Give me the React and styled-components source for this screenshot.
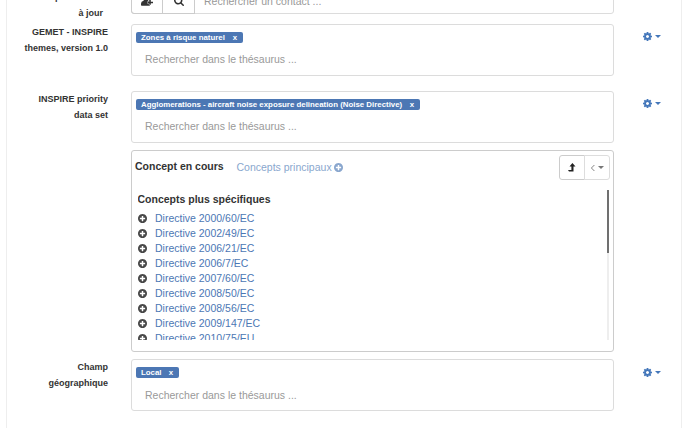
import React from "react";
import styled, { createGlobalStyle } from "styled-components";

const GlobalStyle = createGlobalStyle`
  * { box-sizing: border-box; }
  body { margin: 0; background: #fff; overflow: hidden; font-family: "Liberation Sans", Arial, sans-serif; font-size: 10.5px; line-height: 15px; color: #333; }
  svg { display: block; flex: none; fill: currentColor; }
`;

const Form = styled.form`
  height: 428px;
  margin: 0 2px 0 6px;
  border: solid #eee;
  border-width: 0 1px;
  overflow: hidden;
`;

const Row = styled.div`
  display: grid;
  grid-template-columns: 101px 483px 1fr;
  column-gap: 23px;
  align-items: start;
  margin-bottom: ${(p) => p.$gap || 0}px;
  margin-top: ${(p) => p.$offset || 0}px;
`;

const Label = styled.label`
  text-align: right;
  font-size: 9px;
  font-weight: bold;
  line-height: 16px;
  white-space: nowrap;
  margin-top: ${(p) => p.$shift || 0}px;
`;

const LabelLine = styled.span`
  display: block;
  padding-right: ${(p) => p.$inset || 0}px;
`;

const Field = styled.div`
  height: 52px;
  border: 1px solid #dcdcdc;
  border-radius: 3px;
  padding: 7px 4px 0;
`;

const Tag = styled.span`
  display: flex;
  align-items: center;
  justify-content: space-between;
  width: ${(p) => p.$width}px;
  height: 11px;
  padding: 0 6px 0 5px;
  border-radius: 2px;
  background: #4c77b4;
  color: #fff;
  font-size: 7.87px;
  font-weight: bold;
  line-height: 11px;
  white-space: nowrap;
`;

const Hint = styled.div`
  margin: ${(p) => (p.$low ? 10 : 9)}px 0 0 9px;
  color: #999;
`;

const Settings = styled.div`
  display: flex;
  align-items: center;
  gap: 3px;
  padding: ${(p) => (p.$low ? 9 : 8)}px 0 0 6px;
  color: #4477ba;
`;

const Caret = styled.i`
  border: solid transparent;
  border-width: 3px 3px 0;
  border-top-color: currentColor;
`;

const ContactField = styled.div`
  display: flex;
  height: 24px;
  border: 1px solid #dcdcdc;
  border-radius: 3px;
`;

const ContactButton = styled.span`
  display: flex;
  align-items: center;
  justify-content: center;
  width: ${(p) => p.$width}px;
  margin: -1px 0 -1px -1px;
  padding-bottom: 2px;
  border: 1px solid #ccc;
  border-radius: ${(p) => (p.$first ? "3px 0 0 3px" : "0")};
`;

const ContactHint = styled.span`
  padding: 3px 0 0 9px;
  color: #999;
`;

const Browser = styled.section`
  width: 483px;
  height: 202px;
  margin: 7px 0 7px 124px;
  border: 1px solid #ccc;
  border-radius: 3px;
`;

const BrowserHeader = styled.header`
  display: flex;
  height: 39px;
  padding: 4px 3px 0;
`;

const Current = styled.strong`
  width: 101.5px;
  line-height: 23px;
  white-space: nowrap;
`;

const TopConcepts = styled.a`
  display: flex;
  align-items: center;
  gap: 2px;
  height: 25px;
  color: #8aa7ce;
  white-space: nowrap;
`;

const ButtonGroup = styled.div`
  display: flex;
  margin-left: auto;
`;

const ToolButton = styled.button`
  display: flex;
  align-items: center;
  justify-content: center;
  gap: 2px;
  width: 26px;
  height: 25px;
  padding: 0;
  border: 1px solid ${(p) => (p.$muted ? "#ddd" : "#ccc")};
  border-radius: ${(p) => (p.$muted ? "0 3px 3px 0" : "3px 0 0 3px")};
  margin-left: ${(p) => (p.$muted ? -1 : 0)}px;
  background: #fff;
  color: ${(p) => (p.$muted ? "#777" : "#222")};
`;

const Scroller = styled.div`
  display: flex;
  justify-content: space-between;
  height: 150px;
  margin: 0 4px 0 5.5px;
  overflow: hidden;
`;

const Track = styled.div`
  width: 2px;
  height: 150px;
  background: #eee;
`;

const Thumb = styled.div`
  height: 63px;
  background: #707070;
`;

const Narrower = styled.h4`
  margin: 2px 0 4px;
  font-size: 10.5px;
  line-height: 15px;
`;

const Concept = styled.div`
  display: flex;
  align-items: center;
  gap: 8.5px;
  height: 15px;
  color: #484848;
`;

const ConceptLink = styled.a`
  color: #4c77b4;
`;

const CogIcon = () => (
  <svg width="9" height="9" viewBox="0 128 1536 1536">
    <path d="M1024 896q0-106-75-181t-181-75-181 75-75 181 75 181 181 75 181-75 75-181zm512-109v222q0 12-8 23t-20 13l-185 28q-19 54-39 91 35 50 107 138 10 12 10 25t-9 23q-27 37-99 108t-94 71q-12 0-26-9l-138-108q-44 23-91 38-16 136-29 186-7 28-36 28h-222q-14 0-24.5-8.5t-11.5-21.5l-28-184q-49-16-90-37l-141 107q-10 9-25 9-14 0-25-11-126-114-165-168-7-10-7-23 0-12 8-23 15-21 51-66.5t54-70.5q-27-50-41-99l-183-27q-13-2-21-12.5t-8-23.5v-222q0-12 8-23t19-13l186-28q14-46 39-92-40-57-107-138-10-12-10-24 0-10 9-23 26-36 98.5-107.5t94.5-71.5q13 0 26 10l138 107q44-23 91-38 16-136 29-186 7-28 36-28h222q14 0 24.5 8.5t11.5 21.5l28 184q49 16 90 37l142-107q9-9 24-9 13 0 25 10 129 119 165 170 7 8 7 22 0 12-8 23-15 21-51 66.5t-54 70.5q26 50 41 98l183 28q13 2 21 12.5t8 23.5z" />
  </svg>
);

const PlusIcon = () => (
  <svg width="9" height="9" viewBox="0 128 1536 1536">
    <path d="M1216 960v-128q0-26-19-45t-45-19h-256v-256q0-26-19-45t-45-19h-128q-26 0-45 19t-19 45v256h-256q-26 0-45 19t-19 45v128q0 26 19 45t45 19h256v256q0 26 19 45t45 19h128q26 0 45-19t19-45v-256h256q26 0 45-19t19-45zm320-64q0 209-103 385.5t-279.5 279.5-385.5 103-385.5-103-279.5-279.5-103-385.5 103-385.5 279.5-279.5 385.5-103 385.5 103 279.5 279.5 103 385.5z" />
  </svg>
);

const SearchIcon = () => (
  <svg width="10" height="10" viewBox="0 128 1664 1664">
    <path d="M1152 832q0-185-131.5-316.5t-316.5-131.5-316.5 131.5-131.5 316.5 131.5 316.5 316.5 131.5 316.5-131.5 131.5-316.5zm512 832q0 52-38 90t-90 38q-54 0-90-38l-343-342q-179 124-399 124-143 0-273.5-55.5t-225-150-150-225-55.5-273.5 55.5-273.5 150-225 225-150 273.5-55.5 273.5 55.5 225 150 150 225 55.5 273.5q0 220-124 399l343 343q37 37 37 90z" />
  </svg>
);

const AddContactIcon = () => (
  <svg width="12" height="10" viewBox="0 0 12 10">
    <circle cx="5" cy="2.8" r="2.8" />
    <path d="M0 9V7.5Q0 5.2 2.5 4.8H7Q9 5.2 9 7.5V9Q9 9.7 8.3 9.7H.7Q0 9.7 0 9Z" />
    <path d="M9 3.5v5.5M6.2 6.5H12" stroke="#fff" strokeWidth="2.2" />
    <path d="M9 3.5v5.3M6.5 6.5H12" stroke="currentColor" strokeWidth="1.6" />
  </svg>
);

const LevelUpIcon = () => (
  <svg width="8" height="9" viewBox="0 0 8 9">
    <path d="M4.4 0L7.5 3.4H5.5V8.6H1L0 7.1H3.4V3.4H1.5Z" />
  </svg>
);

const AngleLeftIcon = () => (
  <svg width="6" height="8" viewBox="0 0 6 8">
    <path d="M4.4 1L1.4 4l3 3" fill="none" stroke="currentColor" strokeWidth="0.9" />
  </svg>
);

const concepts = ["2000/60/EC", "2002/49/EC", "2006/21/EC", "2006/7/EC", "2007/60/EC", "2008/50/EC", "2008/56/EC", "2009/147/EC", "2010/75/EU"];

function ThesaurusRow({ lines, tag, width, gap, low }) {
  return (
    <Row $gap={gap}>
      <Label>{lines.map((line) => <LabelLine key={line}>{line}</LabelLine>)}</Label>
      <Field>
        <Tag $width={width}><span>{tag}</span><span>x</span></Tag>
        <Hint $low={low}>Rechercher dans le thésaurus ...</Hint>
      </Field>
      <Settings $low={low}><CogIcon /><Caret /></Settings>
    </Row>
  );
}

export default function App() {
  return (
    <>
      <GlobalStyle />
      <Form>
        <Row $offset={-10} $gap={3}>
          <Label $shift={-1}>
            <LabelLine>pour la mise</LabelLine>
            <LabelLine $inset={5}>à jour</LabelLine>
          </Label>
          <ContactField>
            <ContactButton $width={32} $first><AddContactIcon /></ContactButton>
            <ContactButton $width={33}><SearchIcon /></ContactButton>
            <ContactHint>Rechercher un contact ...</ContactHint>
          </ContactField>
        </Row>
        <ThesaurusRow lines={["GEMET - INSPIRE", "themes, version 1.0"]} tag="Zones à risque naturel" width={107} gap={15} />
        <ThesaurusRow lines={["INSPIRE priority", "data set"]} tag="Agglomerations - aircraft noise exposure delineation (Noise Directive)" width={284} />
        <Browser>
          <BrowserHeader>
            <Current>Concept en cours</Current>
            <TopConcepts>Concepts principaux <PlusIcon /></TopConcepts>
            <ButtonGroup>
              <ToolButton type="button"><LevelUpIcon /></ToolButton>
              <ToolButton type="button" $muted><AngleLeftIcon /><Caret /></ToolButton>
            </ButtonGroup>
          </BrowserHeader>
          <Scroller>
            <div>
              <Narrower>Concepts plus spécifiques</Narrower>
              {concepts.map((name) => (
                <Concept key={name}><PlusIcon /><ConceptLink>Directive {name}</ConceptLink></Concept>
              ))}
            </div>
            <Track><Thumb /></Track>
          </Scroller>
        </Browser>
        <ThesaurusRow lines={["Champ", "géographique"]} tag="Local" width={43} low />
      </Form>
    </>
  );
}
